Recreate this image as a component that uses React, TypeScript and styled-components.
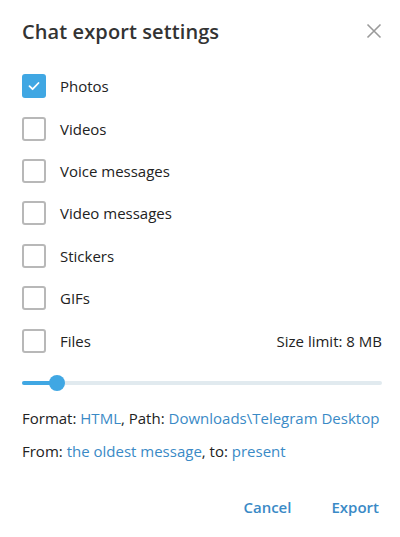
import React from 'react';
import styled, { createGlobalStyle } from 'styled-components';

const GlobalStyle = createGlobalStyle`
  html, body {
    margin: 0;
    padding: 0;
    background: #ffffff;
  }
  body {
    font-family: "Open Sans", "Noto Sans", Arial, sans-serif;
    color: #222222;
  }
`;

const Box = styled.div`
  width: 400px;
  height: 537px;
  box-sizing: border-box;
  padding: 0 18px 0 22px;
  display: flex;
  flex-direction: column;
`;

const Header = styled.div`
  display: flex;
  justify-content: space-between;
  align-items: center;
  height: 62px;
`;

const Title = styled.h1`
  margin: 0;
  font-size: 20px;
  font-weight: 600;
  color: #333333;
  letter-spacing: 0.1px;
`;

const CloseBtn = styled.button`
  width: 24px;
  height: 24px;
  border: 0;
  padding: 0;
  background: none;
  display: flex;
  align-items: center;
  justify-content: center;
  margin-right: -4px;
`;

const List = styled.div`
  display: flex;
  flex-direction: column;
  margin-top: 3px;
`;

const Row = styled.label`
  display: flex;
  align-items: center;
  height: 42.4px;
  font-size: 15px;
  color: #222222;
`;

const Box24 = styled.span<{ $checked?: boolean }>`
  width: 24px;
  height: 24px;
  box-sizing: border-box;
  border-radius: 3px;
  border: ${(p) => (p.$checked ? 'none' : '2px solid #b8b8b8')};
  background: ${(p) => (p.$checked ? '#40a7e3' : '#ffffff')};
  display: flex;
  align-items: center;
  justify-content: center;
  margin-right: 14px;
  flex-shrink: 0;
`;

const Label = styled.span`
  flex: 1;
`;

const Limit = styled.span`
  font-size: 15px;
  color: #222222;
`;

const Slider = styled.div`
  position: relative;
  height: 18px;
  margin-top: 12px;
  display: flex;
  align-items: center;
`;

const Track = styled.div`
  width: 100%;
  height: 4px;
  border-radius: 2px;
  background: #e1eaef;
  position: relative;
`;

const Fill = styled.div`
  position: absolute;
  left: 0;
  top: 0;
  height: 4px;
  border-radius: 2px;
  background: #40a7e3;
`;

const Thumb = styled.div`
  position: absolute;
  top: 50%;
  width: 16px;
  height: 16px;
  border-radius: 50%;
  background: #40a7e3;
  transform: translate(-50%, -50%);
`;

const Info = styled.div`
  display: flex;
  flex-direction: column;
  gap: 12px;
  margin-top: 16px;
  font-size: 15px;
  line-height: 21px;
`;

const Line = styled.div`
  white-space: nowrap;
`;

const Link = styled.a`
  color: #3a8ac6;
  text-decoration: none;
`;

const Footer = styled.div`
  display: flex;
  justify-content: flex-end;
  gap: 40px;
  margin-top: 35px;
  padding-right: 3px;
`;

const Action = styled.button`
  border: 0;
  background: none;
  padding: 0;
  font-family: inherit;
  font-size: 15px;
  font-weight: 600;
  color: #3a8ac6;
`;

const Check = () => (
  <svg width="14" height="14" viewBox="0 0 14 14">
    <path d="M2.5 7.2 L5.6 10.2 L11.5 4" fill="none" stroke="#fff" strokeWidth="1.8" strokeLinecap="round" strokeLinejoin="round" />
  </svg>
);

const items = [
  { name: 'Photos', checked: true },
  { name: 'Videos' },
  { name: 'Voice messages' },
  { name: 'Video messages' },
  { name: 'Stickers' },
  { name: 'GIFs' },
  { name: 'Files', limit: true },
];

export default function App() {
  const value = 9.7;
  return (
    <>
      <GlobalStyle />
      <Box>
        <Header>
          <Title>Chat export settings</Title>
          <CloseBtn>
            <svg width="16" height="16" viewBox="0 0 16 16">
              <path d="M1.5 1.5 L14.5 14.5 M14.5 1.5 L1.5 14.5" stroke="#9a9a9a" strokeWidth="1.6" />
            </svg>
          </CloseBtn>
        </Header>
        <List>
          {items.map((it) => (
            <Row key={it.name}>
              <Box24 $checked={it.checked}>{it.checked && <Check />}</Box24>
              <Label>{it.name}</Label>
              {it.limit && <Limit>Size limit: 8 MB</Limit>}
            </Row>
          ))}
        </List>
        <Slider>
          <Track>
            <Fill style={{ width: `${value}%` }} />
            <Thumb style={{ left: `${value}%` }} />
          </Track>
        </Slider>
        <Info>
          <Line>
            Format: <Link>HTML</Link>, Path: <Link>Downloads\Telegram Desktop</Link>
          </Line>
          <Line>
            From: <Link>the oldest message</Link>, to: <Link>present</Link>
          </Line>
        </Info>
        <Footer>
          <Action>Cancel</Action>
          <Action>Export</Action>
        </Footer>
      </Box>
    </>
  );
}
